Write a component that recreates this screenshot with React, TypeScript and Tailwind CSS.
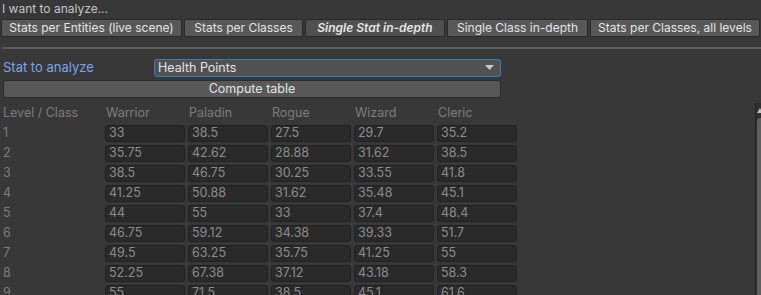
import React from 'react'

const tabs = [
  { label: 'Stats per Entities (live scene)', w: 'w-[181px]' },
  { label: 'Stats per Classes', w: 'w-[119px]' },
  { label: 'Single Stat in-depth', w: 'w-[140px]', active: true },
  { label: 'Single Class in-depth', w: 'w-[141px]' },
  { label: 'Stats per Classes, all levels', w: 'w-[170px]' },
]

const classes = ['Warrior', 'Paladin', 'Rogue', 'Wizard', 'Cleric']

const rows = [
  ['33', '38.5', '27.5', '29.7', '35.2'],
  ['35.75', '42.62', '28.88', '31.62', '38.5'],
  ['38.5', '46.75', '30.25', '33.55', '41.8'],
  ['41.25', '50.88', '31.62', '35.48', '45.1'],
  ['44', '55', '33', '37.4', '48.4'],
  ['46.75', '59.12', '34.38', '39.33', '51.7'],
  ['49.5', '63.25', '35.75', '41.25', '55'],
  ['52.25', '67.38', '37.12', '43.18', '58.3'],
  ['55', '71.5', '38.5', '45.1', '61.6'],
]

export default function App() {
  return (
    <div className="relative w-[761px] h-[295px] overflow-hidden bg-[#383838] text-[12px] font-['Inter','Liberation_Sans',sans-serif] text-[#c4c4c4]">
      <div className="h-[19px] pl-[2px] leading-[18px] text-[#c4c4c4]">I want to analyze...</div>

      {/* toolbar tabs */}
      <div className="flex gap-[2px] pl-[1px]">
        {tabs.map((t) => (
          <div
            key={t.label}
            className={
              'h-[18px] shrink-0 rounded-[2px] border border-[#2a2a2a] flex items-center justify-center leading-none text-[12px] ' +
              t.w +
              (t.active ? ' bg-[#505050] italic font-semibold text-[#e4e4e4]' : ' bg-[#585858] text-[#e4e4e4]')
            }
          >
            {t.label}
          </div>
        ))}
      </div>

      <div className="mt-[10px] ml-[2px] h-[2px] bg-[#5a5a5a]" />

      <div className="mt-[10px] flex items-center h-[18px]">
        <div className="w-[154px] pl-[3px] text-[13px] text-[#7aa7e9]">Stat to analyze</div>
        <div className="w-[347px] h-[18px] rounded-[3px] border border-[#3b7bc0] bg-[#515151] flex items-center justify-between pl-[3px] pr-[6px] text-[#e4e4e4] text-[12.5px]">
          <span>Health Points</span>
          <svg width="9" height="6" viewBox="0 0 9 6">
            <path d="M0 0 L9 0 L4.5 5 Z" fill="#c8c8c8" />
          </svg>
        </div>
      </div>

      <div className="mt-[3px] ml-[3px] w-[498px] h-[18px] rounded-[3px] border border-[#2b2b2b] bg-[#585858] flex items-center justify-center text-[#e4e4e4] text-[12.5px]">
        Compute table
      </div>

      <div className="mt-[5px] flex h-[20px] items-center text-[12.5px] text-[#7d7d7d]">
        <div className="w-[105px] pl-[3px]">Level / Class</div>
        {classes.map((c) => (
          <div key={c} className="w-[83px] pl-[1px]">
            {c}
          </div>
        ))}
      </div>

      <div className="mt-[2px] flex flex-col gap-[3px]">
        {rows.map((r, i) => (
          <div key={i} className="flex items-center h-[17px]">
            <div className="w-[105px] pl-[3px] text-[#7d7d7d] text-[12.5px]">{i + 1}</div>
            <div className="flex gap-[3px]">
              {r.map((v, j) => (
                <div
                  key={j}
                  className="w-[80px] h-[17px] rounded-[3px] border border-[#212121] bg-[#2a2a2a] pl-[3px] flex items-center text-[#8c8c8c] text-[12.5px] leading-none"
                >
                  {v}
                </div>
              ))}
            </div>
          </div>
        ))}
      </div>

      {/* vertical scrollbar peeking in on the right edge */}
      <div className="absolute right-0 top-[103px] w-[6px] h-[192px] bg-[#2f2f2f] border-l border-[#232323]">
        <svg className="absolute left-[1px] top-[5px]" width="6" height="5" viewBox="0 0 6 5">
          <path d="M3 0 L6 5 L0 5 Z" fill="#c0c0c0" />
        </svg>
        <div className="absolute left-[1px] top-[15px] w-[8px] h-[180px] rounded-[3px] bg-[#5f5f5f]" />
      </div>
    </div>
  )
}
